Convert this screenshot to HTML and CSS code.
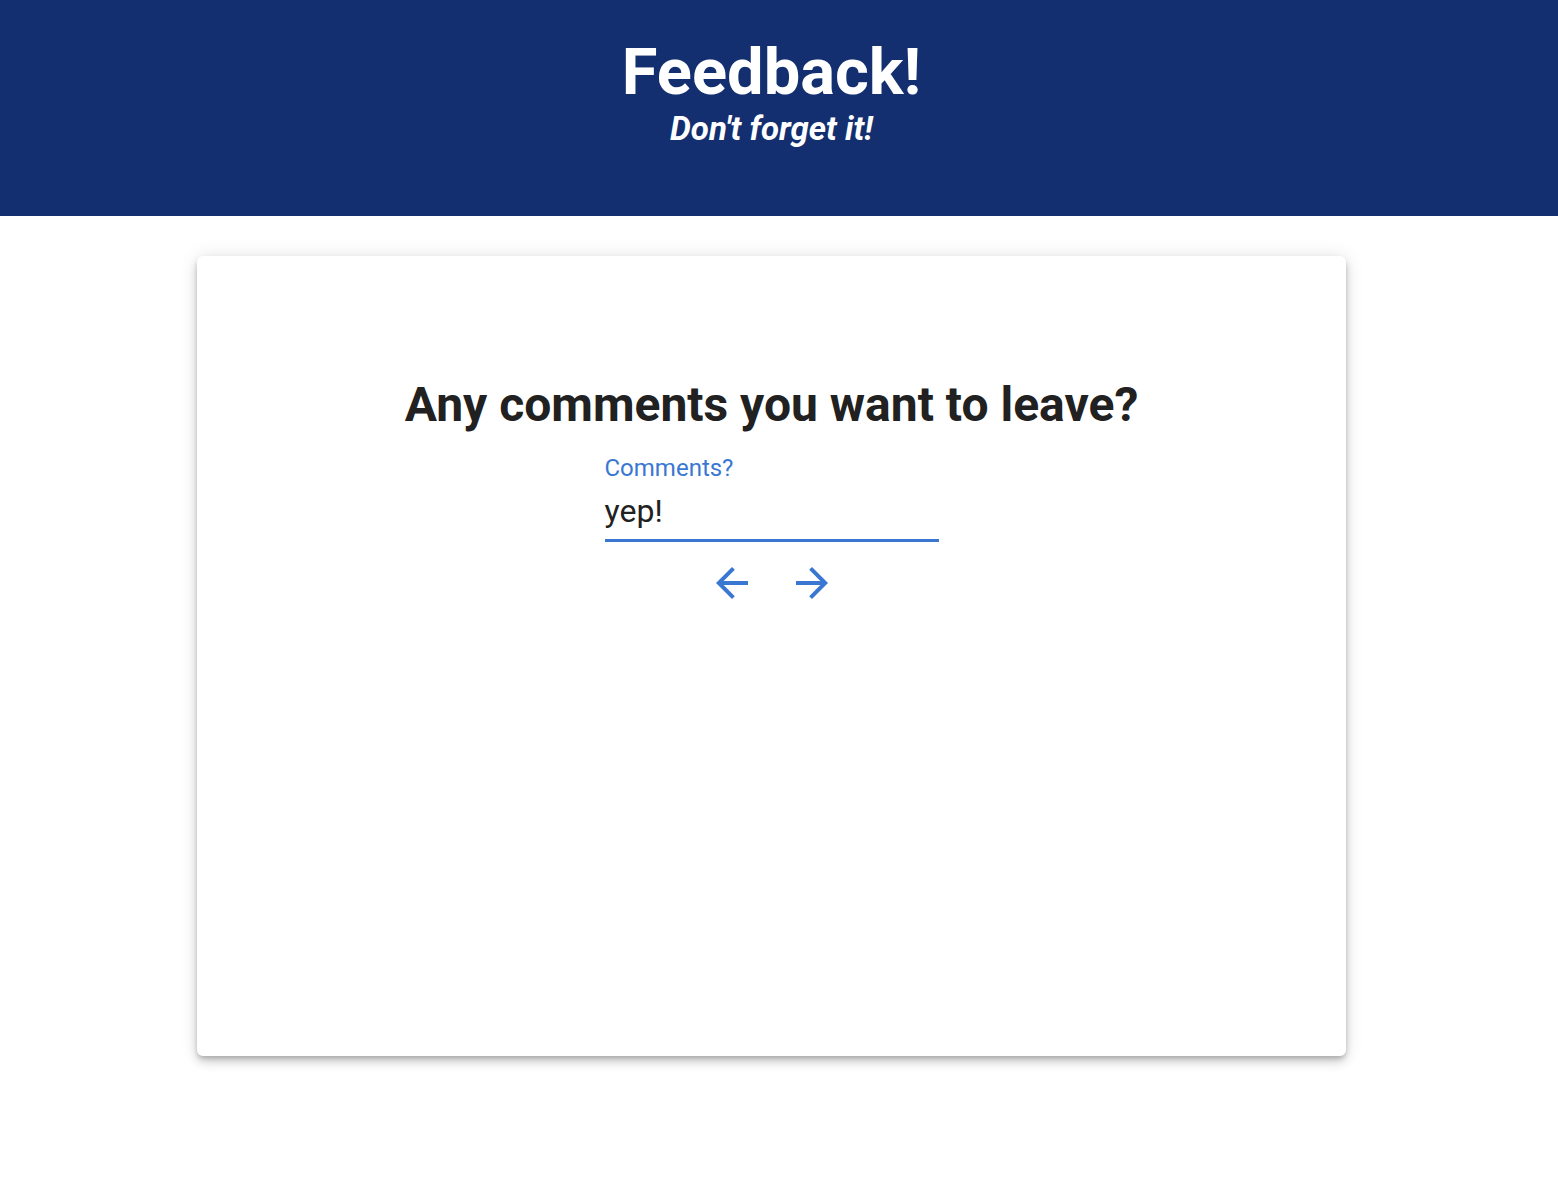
FILE: index.html
```html
<!DOCTYPE html>
<html lang="en">
<head>
<meta charset="utf-8">
<title>Feedback!</title>
<link rel="stylesheet" href="styles.css">
</head>
<body>
<header class="hero">
  <div class="hero-inner">
    <h1 class="hero-title">Feedback!</h1>
    <p class="hero-sub">Don't forget it!</p>
  </div>
</header>
<main class="main">
  <section class="card">
    <h2 class="question">Any comments you want to leave?</h2>
    <div class="field">
      <label class="field-label" for="c">Comments?</label>
      <div class="field-input" id="c">yep!</div>
    </div>
    <div class="nav">
      <button class="icon-btn" aria-label="Back">
        <svg viewBox="0 0 24 24" width="48" height="48"><path d="M20 11H7.83l5.59-5.59L12 4l-8 8 8 8 1.41-1.41L7.83 13H20v-2z"/></svg>
      </button>
      <button class="icon-btn" aria-label="Next">
        <svg viewBox="0 0 24 24" width="48" height="48"><path d="M12 4l-1.41 1.41L16.17 11H4v2h12.17l-5.58 5.59L12 20l8-8z"/></svg>
      </button>
    </div>
  </section>
</main>
</body>
</html>
```
FILE: styles.css
```css
html, body {
  margin: 0;
  padding: 0;
  background: #ffffff;
  font-family: Roboto, "Liberation Sans", sans-serif;
  color: #212121;
}
.hero {
  background: #132f70;
  height: 216px;
  color: #ffffff;
}
.hero-inner {
  padding-right: 15px;
  padding-top: 36px;
  text-align: center;
}
.hero-title {
  margin: 0;
  font-size: 65px;
  font-weight: 700;
  line-height: 72px;
}
.hero-sub {
  margin: 3px 0 0;
  font-size: 33px;
  font-weight: 700;
  font-style: italic;
  line-height: 36px;
}
.main {
  padding: 40px 15px 40px 0;
  display: flex;
  justify-content: center;
}
.card {
  width: 1149px;
  height: 800px;
  box-sizing: border-box;
  background: #ffffff;
  border-radius: 6px;
  box-shadow: 0 3px 5px -1px rgba(0,0,0,0.2), 0 6px 10px 0 rgba(0,0,0,0.14), 0 1px 18px 0 rgba(0,0,0,0.12);
  padding-top: 121px;
  display: flex;
  flex-direction: column;
  align-items: center;
}
.question {
  margin: 0;
  font-size: 48px;
  font-weight: 700;
  line-height: 56px;
  color: #212121;
}
.field {
  margin-top: 21px;
  width: 334px;
  border-bottom: 3px solid #3a77d2;
}
.field-label {
  display: block;
  font-size: 24px;
  line-height: 28px;
  color: #3a77d2;
}
.field-input {
  font-size: 32px;
  line-height: 48px;
  color: #212121;
  padding: 5px 0 4px;
}
.nav {
  margin-top: 17px;
  display: flex;
  gap: 32px;
}
.icon-btn {
  border: 0;
  background: none;
  padding: 0;
  width: 48px;
  height: 48px;
  cursor: pointer;
}
.icon-btn svg {
  display: block;
  fill: #3a77d2;
}
```
